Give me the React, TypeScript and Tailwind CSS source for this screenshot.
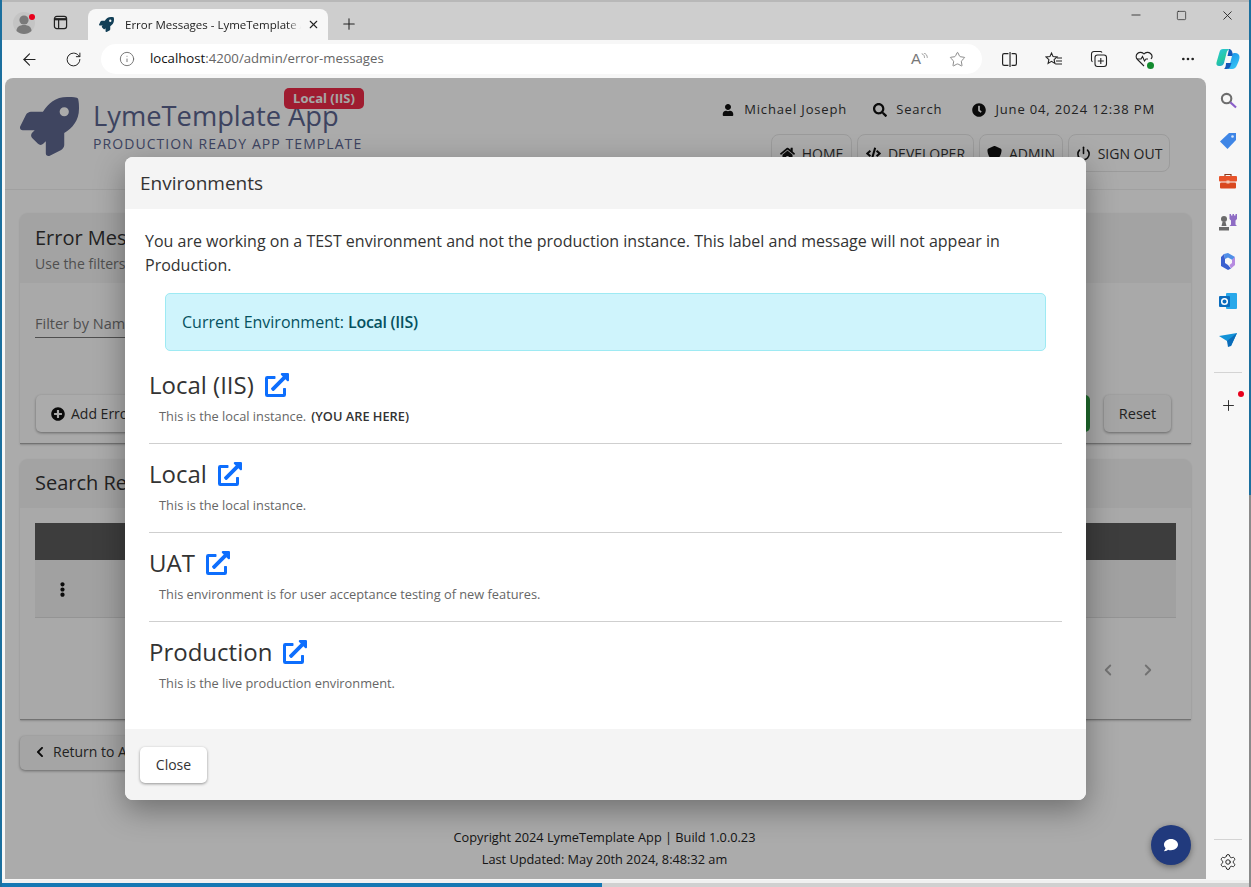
import {
  FaRocket,
  FaUser,
  FaSearch,
  FaClock,
  FaHome,
  FaCode,
  FaExternalLinkAlt,
  FaPlusCircle,
  FaEllipsisV,
  FaChevronLeft,
  FaComment,
} from "react-icons/fa";
import { FaShield } from "react-icons/fa6";
import {
  ArrowLeft,
  RotateCw,
  Info,
  Star,
  Minus,
  Square,
  X,
  Plus,
  Settings,
  Ellipsis,
  Power,
  ChevronLeft,
  ChevronRight,
} from "lucide-react";

const environments = [
  { name: "Local (IIS)", text: "This is the local instance.", here: true },
  { name: "Local", text: "This is the local instance." },
  { name: "UAT", text: "This environment is for user acceptance testing of new features." },
  { name: "Production", text: "This is the live production environment." },
];

const navItems = [
  { label: "HOME", icon: FaHome, width: "w-[81px]" },
  { label: "DEVELOPER", icon: FaCode, width: "w-[117px]" },
  { label: "ADMIN", icon: FaShield, width: "w-[84px]" },
  { label: "SIGN OUT", icon: Power, width: "w-[102px]" },
];

const BrowserTabs = () => (
  <div className="h-[40px] bg-[#cecece] flex items-end border-t-2 border-[#b8b8b8] relative">
    <div className="w-[88px] h-full flex items-center gap-[18px] pl-[13px] pt-[3px]">
      <svg viewBox="0 0 22 22" className="w-[22px] h-[22px] shrink-0">
        <circle cx="11" cy="11" r="11" fill="#c4c4c4" />
        <circle cx="11" cy="8" r="4.600" fill="#7a7a7a" />
        <path d="M3.500 19c0-4 3-6 7.500-6s7.500 2 7.500 6c-2 2-5 3-7.500 3s-5.500-1-7.500-3z" fill="#7a7a7a" />
      </svg>
      <svg viewBox="0 0 16 16" className="w-[15px] h-[15px]" fill="none" stroke="#222" strokeWidth="1.300">
        <rect x="1.500" y="1.500" width="13" height="13" rx="2.500" />
        <path d="M2 4.500h12" strokeWidth="2.400" />
        <path d="M6 5v9" />
      </svg>
    </div>
    <div className="w-[240px] h-[31px] bg-[#f7f7f7] rounded-t-lg flex items-center pl-[11px]">
      <FaRocket className="text-[#123f57] text-[15px] shrink-0" />
      <span className="ml-[11px] text-[11.5px] text-[#222] w-[176px] overflow-hidden whitespace-nowrap [mask-image:linear-gradient(to_right,black_92%,transparent)]">
        Error Messages - LymeTemplate App
      </span>
      <X size={13} className="ml-[6px] text-[#222]" />
    </div>
    <div className="ml-[12px] h-full flex items-center pt-[6px]">
      <Plus size={18} strokeWidth={1.4} className="text-[#222]" />
    </div>
    <div className="ml-auto h-full flex items-center pb-[12px] pr-[16px] gap-[33px] text-[#222]">
      <Minus size={14} strokeWidth={1.4} />
      <Square size={11} strokeWidth={1.5} />
      <X size={15} strokeWidth={1.4} />
    </div>
    <span className="absolute left-[29px] top-[12px] w-[6px] h-[6px] rounded-full bg-[#e8001c]" />
  </div>
);

const BrowserToolbar = () => (
  <div className="h-[38px] bg-[#f7f7f7] flex items-center pl-[20px]">
    <ArrowLeft size={19} strokeWidth={1.4} className="text-[#222] shrink-0" />
    <RotateCw size={17} strokeWidth={1.4} className="ml-[26px] text-[#222] shrink-0" />
    <div className="ml-[19px] w-[881px] shrink-0 h-[30px] bg-white rounded-full flex items-center pl-[18px] pr-[16px]">
      <Info size={16} strokeWidth={1.3} className="text-[#666]" />
      <span className="ml-[15px] text-[13.2px] text-[#666]">
        <span className="text-[#111]">localhost</span>:4200/admin/error-messages
      </span>
      <span className="ml-auto text-[15px] text-[#777] font-['Liberation_Sans',sans-serif]">A</span>
      <svg viewBox="0 0 10 10" className="w-[7px] h-[7px] mb-[6px]" fill="none" stroke="#777" strokeWidth="1">
        <path d="M1 1c3 1 4 3 4 6M4 0c3 1 5 3 5 7" />
      </svg>
      <Star size={17} strokeWidth={1.2} className="ml-[21px] text-[#777]" />
    </div>
    <div className="ml-[19px] flex items-center gap-[27px] text-[#222] shrink-0">
      <svg viewBox="0 0 16 16" className="w-[17px] h-[17px]" fill="none" stroke="currentColor" strokeWidth="1.100">
        <path d="M7 2.500H3a1.500 1.500 0 0 0-1.500 1.500v8A1.500 1.500 0 0 0 3 13.500h4M10 2.500h3A1.500 1.500 0 0 1 14.500 4v8a1.500 1.500 0 0 1-1.500 1.500h-3M8.500 1v14" />
      </svg>
      <svg viewBox="0 0 18 16" className="w-[18px] h-[17px]" fill="none" stroke="currentColor" strokeWidth="1.100">
        <path d="M6.500 1.500l1.600 3.600 3.900.4-2.900 2.600.8 3.800-3.400-2-3.400 2 .8-3.800L1 5.500l3.900-.4zM12 6.500h5M11 9.500h6M10.500 12.500h6.500" />
      </svg>
      <svg viewBox="0 0 18 18" className="w-[18px] h-[18px]" fill="none" stroke="currentColor" strokeWidth="1.100">
        <rect x="5" y="5" width="11.500" height="11.500" rx="2.500" />
        <path d="M10.800 8v6M7.800 11h6M12 2.500A2 2 0 0 0 10 1.500H4A2.500 2.500 0 0 0 1.500 4v6a2 2 0 0 0 1 1.800" />
      </svg>
      <div className="relative w-[18px] h-[18px]">
        <svg viewBox="0 0 18 18" className="w-[18px] h-[18px]" fill="none" stroke="currentColor" strokeWidth="1.100">
          <path d="M9 16L2.500 9.500a4 4 0 0 1 0-6 4.500 4.500 0 0 1 6.500.5 4.500 4.500 0 0 1 6.500-.5 4 4 0 0 1 .5 5.500" />
          <path d="M2 9h4l1.500-2.500 2 4.500 1.500-2h2" />
        </svg>
        <span className="absolute right-[-1px] bottom-[-1px] w-[7px] h-[7px] rounded-full bg-[#128a2e]" />
      </div>
      <Ellipsis size={16} strokeWidth={2} />
      <svg viewBox="0 0 24 22" className="w-[24px] h-[22px] ml-[-7px]">
        <defs>
          <linearGradient id="copilotA" x1="0" y1="0" x2="0.6" y2="1">
            <stop offset="0" stopColor="#2cc5e8" />
            <stop offset="0.6" stopColor="#25c9a0" />
            <stop offset="1" stopColor="#1fa0d8" />
          </linearGradient>
          <linearGradient id="copilotB" x1="0.2" y1="0" x2="0.8" y2="1">
            <stop offset="0" stopColor="#1a8fe8" />
            <stop offset="1" stopColor="#36c8f5" />
          </linearGradient>
        </defs>
        <path d="M7 1h7c-2 .5-3 2-3.500 4L8 15c-.5 2-2 3-4 3H3c-2 0-3-1.500-2.500-3.500L3.500 4C4 2 5 1 7 1z" fill="url(#copilotA)" />
        <path d="M13 1c1.500 0 2.500 1 3 2.500l1.500 4.500h-6z" fill="#1458b8" />
        <path d="M18 5h1c2.500 0 4.500 1.500 4.500 4 0 2-1 5-2.500 8-1 2.500-2.500 4-5 4H9c2.500 0 4-1.500 4.500-3.500L16 8c.3-1.500 1-3 2-3z" fill="url(#copilotB)" />
        <path d="M10 15h5.500l-1.500 4c-.5 1.300-2 2-3.500 2H8c1.500-1 2-4 2-6z" fill="#1458b8" />
      </svg>
    </div>
  </div>
);

const SideRail = () => (
  <div className="w-[45px] bg-[#f7f7f7] flex flex-col items-center pt-[14px] pr-[1px]">
    <svg viewBox="0 0 18 18" className="w-[17px] h-[17px]" fill="none" strokeWidth="2.200">
      <circle cx="7" cy="7" r="5" stroke="#6d6d6d" />
      <path d="M11 11l6 5.500" stroke="#8a5fc8" />
    </svg>
    <svg viewBox="0 0 18 18" className="w-[18px] h-[18px] mt-[23px]">
      <path d="M10 1h7v7l-8.500 9L1 9.500z" fill="#3f86e6" />
      <circle cx="13.500" cy="4.500" r="1.300" fill="#d6e6fb" />
    </svg>
    <svg viewBox="0 0 18 16" className="w-[18px] h-[16px] mt-[23px]">
      <path d="M6 3V1.500h6V3" fill="none" stroke="#8c3a1c" strokeWidth="1.200" />
      <rect x="0" y="3" width="18" height="5.500" rx="1" fill="#e8532a" />
      <rect x="1" y="9.500" width="16" height="6" rx="1" fill="#d9481f" />
      <rect x="7.500" y="7.500" width="3" height="3" fill="#f3c9b5" />
    </svg>
    <svg viewBox="0 0 20 18" className="w-[20px] h-[18px] mt-[24px]">
      <path d="M11.500 1h1.500v1.500h1.500V1H16v1.500h1.500V1H19v5l-1.500 1.500v4L19 13H11.500l1.500-1.500v-4L11.500 6z" fill="#8e6cc4" />
      <circle cx="6" cy="6" r="3" fill="#6b6b6b" />
      <path d="M4.500 9h3l1 4h-5zM1 14h10v3.500H1z" fill="#6b6b6b" />
    </svg>
    <svg viewBox="0 0 18 18" className="w-[18px] h-[18px] mt-[21px]">
      <path d="M9 1l7 4-2.500 3L9 5.500 6 7 5 2z" fill="#4f8fe8" />
      <path d="M16 5v8l-4 3.500L10.500 13 13 11V8z" fill="#b68be0" />
      <path d="M2 5l3-3 1 5v4l3 2 3 3.500-3 1.500-7-4z" fill="#3a60d0" />
    </svg>
    <svg viewBox="0 0 18 18" className="w-[18px] h-[18px] mt-[22px]">
      <rect x="7" y="1" width="11" height="16" rx="1" fill="#28a8ea" />
      <rect x="0" y="4" width="11" height="11" rx="1" fill="#0a6cbd" />
      <circle cx="5.500" cy="9.500" r="2.800" fill="none" stroke="#fff" strokeWidth="1.500" />
    </svg>
    <svg viewBox="0 0 18 14" className="w-[18px] h-[14px] mt-[23px]">
      <path d="M0 3l18-3-6 13-4-5z" fill="#1493d8" />
      <path d="M18 0L8 8l1 6 3-1z" fill="#0a6bb8" />
    </svg>
    <div className="w-[28px] h-px bg-[#d4d4d4] mt-[25px]" />
    <div className="relative mt-[24px]">
      <Plus size={17} strokeWidth={1.3} className="text-[#222]" />
      <span className="absolute right-[-7px] top-[-6px] w-[6px] h-[6px] rounded-full bg-[#e8001c]" />
    </div>
    <div className="mt-auto w-[28px] h-px bg-[#d4d4d4]" />
    <Settings size={18} strokeWidth={1.3} className="mt-[13px] mb-[8px] text-[#222]" />
  </div>
);

const AppHeader = () => (
  <header className="h-[112px] flex justify-between pl-[15px] pr-[51px] border-b border-[#efefef]">
    <div className="flex items-start pt-[17px]">
      <FaRocket className="mt-[2px] text-[#5f678f] text-[59px]" />
      <div className="ml-[14px] mt-[2px] relative">
        <div className="text-[27.3px] leading-[38px] text-[#5b6590] whitespace-nowrap">LymeTemplate App</div>
        <div className="text-[14px] leading-[17px] tracking-[1.07px] text-[#5b6590] whitespace-nowrap">
          PRODUCTION READY APP TEMPLATE
        </div>
        <span className="absolute left-[191px] top-[-9px] w-[80px] text-center h-[21px] leading-[21px] rounded-[5px] bg-[#ee2a48] text-[#f8f8f8] text-[13px] font-bold whitespace-nowrap">
          Local (IIS)
        </span>
      </div>
    </div>
    <div className="flex flex-col items-end pt-[22px]">
      <div className="flex items-center text-[13px] tracking-[0.85px] text-[#333] h-[20px]">
        <FaUser className="text-[12px] text-[#111]" />
        <span className="ml-[10px]">Michael Joseph</span>
        <FaSearch className="ml-[26px] text-[14px] text-[#111]" />
        <span className="ml-[9px]">Search</span>
        <FaClock className="ml-[30px] text-[14px] text-[#111]" />
        <span className="ml-[9px]">June 04, 2024 12:38 PM</span>
      </div>
      <nav className="flex gap-[5px] mt-[14px] mr-[-15px]">
        {navItems.map((item) => (
          <div
            key={item.label}
            className={`${item.width} h-[38px] flex items-center justify-center gap-[7px] rounded-[8px] border border-[#e8e8e8] text-[14px] text-[#333]`}
          >
            <item.icon size={15} strokeWidth={2.5} className="text-[#111]" />
            {item.label}
          </div>
        ))}
      </nav>
    </div>
  </header>
);

const PageContent = () => (
  <main className="px-[15px] pt-[23px]">
    <section className="h-[231px] rounded-t-lg bg-[#fdfdfd] border-b border-[#aaa] shadow-[0_1px_2px_rgba(0,0,0,0.2)]">
      <div className="h-[70px] bg-[#f3f3f3] rounded-t-lg px-[15px] pt-[11px]">
        <h2 className="text-[20px] leading-[28px] text-[#333]">Error Messages</h2>
        <p className="text-[14px] leading-[22px] mt-[1px] text-[#777]">Use the filters below to search</p>
      </div>
      <div className="px-[15px] pt-[31px]">
        <div className="w-[300px] h-[24px] border-b border-[#777] text-[14.5px] leading-[20px] text-[#777]">
          Filter by Name
        </div>
        <div className="flex items-center justify-between mt-[59px]">
          <button className="h-[37px] w-[200px] ml-[1px] mt-[-2px] rounded-[5px] bg-white shadow-[0_1px_3px_rgba(0,0,0,0.4)] flex items-center pl-[15px] text-[14px] text-[#333]">
            <FaPlusCircle className="text-[14px] text-[#111] mr-[6px]" />
            Add Error Message
          </button>
          <div className="flex items-center gap-[14px] mr-[5px] mt-[-2px]">
            <button className="h-[37px] w-[80px] rounded-[5px] bg-[#2f9e44] text-white text-[14px]">Search</button>
            <button className="h-[37px] w-[67px] rounded-[5px] bg-[#f6f6f6] shadow-[0_1px_3px_rgba(0,0,0,0.4)] text-[14.5px] text-[#333]">
              Reset
            </button>
          </div>
        </div>
      </div>
    </section>
    <section className="h-[261px] mt-[15px] rounded-t-lg bg-[#fdfdfd] border-b border-[#aaa] shadow-[0_1px_2px_rgba(0,0,0,0.2)]">
      <div className="h-[49px] bg-[#f3f3f3] rounded-t-lg px-[15px] pb-[2px] flex items-center">
        <h2 className="text-[20px] text-[#333]">Search Results</h2>
      </div>
      <div className="px-[15px] pt-[15px]">
        <div className="h-[37px] bg-[#5c5c5c]" />
        <div className="h-[58px] bg-[#f1f1f1] border-b border-[#ddd] flex items-center pl-[20px]">
          <FaEllipsisV className="mt-[2px] text-[15px] text-[#111]" />
        </div>
        <div className="flex justify-end gap-[22px] pr-[19px] pt-[43px] text-[#aaa]">
          <ChevronLeft size={18} strokeWidth={2.5} />
          <ChevronRight size={18} strokeWidth={2.5} />
        </div>
      </div>
    </section>
    <button className="mt-[16px] h-[34px] w-[200px] rounded-[5px] bg-[#f6f6f6] shadow-[0_1px_3px_rgba(0,0,0,0.4)] flex items-center pl-[14px] pb-[3px] text-[14px] text-[#333]">
      <FaChevronLeft className="text-[12px] text-[#111] mr-[7px]" />
      Return to Admin
    </button>
    <footer className="mt-[56px] text-center text-[12.75px] leading-[22px] text-[#222] pr-[2px]">
      <div>Copyright 2024 LymeTemplate App | Build 1.0.0.23</div>
      <div>Last Updated: May 20th 2024, 8:48:32 am</div>
    </footer>
  </main>
);

const EnvironmentsModal = () => (
  <div className="absolute left-[125px] top-[157px] w-[961px] h-[643px] bg-white rounded-lg flex flex-col shadow-[0_10px_30px_rgba(0,0,0,0.35)] overflow-hidden">
    <div className="h-[52px] shrink-0 bg-[#f4f4f4] flex items-center px-[15px] text-[19px] text-[#333]">Environments</div>
    <div className="flex-1 px-[20px] pt-[20px]">
      <p className="text-[16px] leading-[24px] text-[#333]">
        You are working on a TEST environment and not the production instance. This label and message will not appear in
        Production.
      </p>
      <div className="ml-[20px] mt-[16px] w-[881px] h-[58px] rounded-[5px] bg-[#cff4fc] border border-[#9eeaf3] flex items-center pl-[16px] text-[16px] text-[#055160]">
        Current Environment:&nbsp;<b className="font-semibold tracking-[-0.3px]">Local (IIS)</b>
      </div>
      <div className="mx-[4px] mt-[4px]">
        {environments.map((env, i) => (
          <div key={env.name} className={`h-[89px] pt-[11px] ${i < 3 ? "border-b border-[#cfcfcf]" : ""}`}>
            <div className="flex items-center h-[38px] text-[24px] text-[#333]">
              {env.name}
              <FaExternalLinkAlt className="ml-[11px] text-[#0d6efd] text-[24px]" />
            </div>
            <div className="pl-[10px] mt-[2px] text-[12.8px] leading-[20px] text-[#666]">
              {env.text}
              {env.here && <b className="ml-[5px] font-semibold text-[#333]">(YOU ARE HERE)</b>}
            </div>
          </div>
        ))}
      </div>
    </div>
    <div className="h-[71px] shrink-0 bg-[#f4f4f4] px-[15px] flex items-center">
      <button className="w-[67px] h-[36px] rounded-[5px] bg-white shadow-[0_1px_3px_rgba(0,0,0,0.4)] text-[14px] text-[#333]">
        Close
      </button>
    </div>
  </div>
);

export default function App() {
  return (
    <div className="relative w-[1251px] h-[887px] overflow-hidden bg-[#f7f7f7] font-['Open_Sans',sans-serif]">
      <BrowserTabs />
      <BrowserToolbar />
      <div className="flex h-[801px]">
        <div className="relative ml-[5px] w-[1201px] h-[801px] rounded-t-lg bg-white overflow-hidden">
          <AppHeader />
          <PageContent />
          <div className="absolute inset-0 bg-black/33" />
          <button className="absolute left-[1146px] top-[747px] w-[40px] h-[40px] rounded-full bg-[#213a7d] flex items-center justify-center shadow-[0_2px_6px_rgba(0,0,0,0.4)]">
            <FaComment className="text-white text-[14px]" />
          </button>
        </div>
        <SideRail />
      </div>
      <div className="absolute left-0 bottom-0 w-full h-[7px] bg-[#d0d0d0] border-t-[3px] border-[#f0f0f0]">
        <div className="w-[602px] h-full bg-[#1477b3]" />
      </div>
      <div className="absolute left-0 top-0 w-[2px] h-full bg-[#1b6f9e]" />
      <div className="absolute right-0 top-0 w-[2px] h-[495px] bg-[#1b6f9e]" />
      <div className="absolute right-0 top-[495px] w-[2px] h-[392px] bg-[#8a8a8a]" />
      <EnvironmentsModal />
    </div>
  );
}
